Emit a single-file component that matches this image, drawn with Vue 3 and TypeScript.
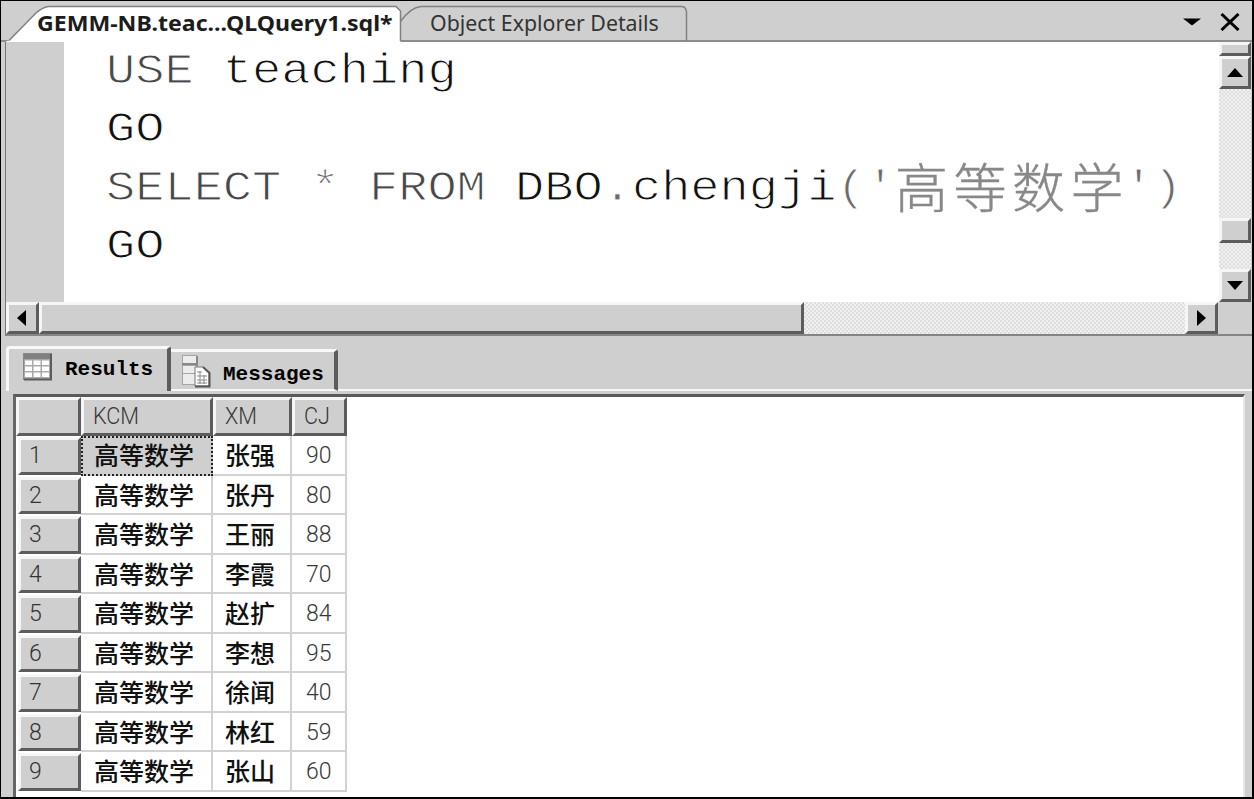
<template>
  <div class="window">
    <header class="tabstrip">
      <svg class="tab-shapes" width="700" height="42" viewBox="0 0 700 42">
        <path class="tab-idle" d="M400 22 Q411 7 421 6.500 H682 Q686 7 686.500 12 V41" />
        <path class="tab-active" d="M5 42 L10 40 L36 13 Q43 7 49 6.500 H396 L400.500 11 V42 Z" />
        <path class="tab-edge" d="M9 40.500 L36 13 Q43 7 49 6.500 H396 L400.500 11 V41" />
      </svg>
      <span class="title active-title"><span>GEMM-NB.teac...QLQuery1.sql*</span></span>
      <span class="title idle-title"><span>Object Explorer Details</span></span>
      <div class="strip-tools">
        <svg width="18" height="8" viewBox="0 0 18 8"><path d="M0 0.500 H18 L9 7.500 Z" /></svg>
        <svg class="close" width="20" height="18" viewBox="0 0 20 18">
          <path d="M1.500 1 L18.500 17 M18.500 1 L1.500 17" />
        </svg>
      </div>
    </header>

    <section class="editor">
      <div class="editor-row">
        <div class="margin"></div>
        <div class="code">
          <div v-for="(line, i) in code" :key="i" class="line">
            <span v-for="(token, j) in line" :key="j" :class="token.kind">{{ token.text }}</span>
          </div>
        </div>
        <div class="vscroll">
          <div class="raised split"></div>
          <div class="raised btn">
            <svg width="16" height="9" viewBox="0 0 16 9"><path d="M8 0 L16 9 H0 Z" /></svg>
          </div>
          <div class="vtrack"></div>
          <div class="raised vthumb"></div>
          <div class="vgap"></div>
          <div class="raised btn">
            <svg width="16" height="9" viewBox="0 0 16 9"><path d="M0 0 H16 L8 9 Z" /></svg>
          </div>
        </div>
      </div>
      <div class="hscroll">
        <div class="raised hbtn">
          <svg width="9" height="16" viewBox="0 0 9 16"><path d="M9 0 V16 L0 8 Z" /></svg>
        </div>
        <div class="raised hthumb"></div>
        <div class="htrack"></div>
        <div class="raised hbtn">
          <svg width="9" height="16" viewBox="0 0 9 16"><path d="M0 0 V16 L9 8 Z" /></svg>
        </div>
        <div class="corner"></div>
      </div>
    </section>

    <nav class="result-tabs">
      <div class="rtab results">
        <svg width="30" height="28" viewBox="0 0 30 28">
          <rect x="0.500" y="0.500" width="28" height="26" fill="#a8a8a8" stroke="#888" />
          <rect x="1" y="1" width="27" height="5" fill="#808080" />
          <path d="M28 1 V26.500 H1" fill="none" stroke="#5c5c5c" stroke-width="2" />
          <g fill="#fff">
            <rect x="2" y="7.500" width="7" height="4.500" /><rect x="10.500" y="7.500" width="7" height="4.500" /><rect x="19" y="7.500" width="7" height="4.500" />
            <rect x="2" y="13.500" width="7" height="4.500" /><rect x="10.500" y="13.500" width="7" height="4.500" /><rect x="19" y="13.500" width="7" height="4.500" />
            <rect x="2" y="19.500" width="7" height="4.500" /><rect x="10.500" y="19.500" width="7" height="4.500" /><rect x="19" y="19.500" width="7" height="4.500" />
          </g>
        </svg>
        <span>Results</span>
      </div>
      <div class="rtab messages">
        <svg width="30" height="34" viewBox="0 0 30 34">
          <g fill="#ececec" stroke="#a4a4a4">
            <rect x="1.500" y="1.500" width="14" height="8" />
            <rect x="1.500" y="11.500" width="14" height="8" />
            <rect x="1.500" y="19.500" width="14" height="11" />
          </g>
          <path d="M1 10 H16 M16 2 V12" stroke="#888" stroke-width="2" />
          <path d="M14 13 H22 L28 19 V32 H14 Z" fill="#fff" stroke="#777" />
          <path d="M22 13 L28.500 19 V32.500 H14" fill="none" stroke="#555" stroke-width="2" />
          <path d="M16 18 H21 M16 22 H26 M16 26 H26 M16 29 H26 M19 17 V30 M23 21 V30" stroke="#888" />
        </svg>
        <span>Messages</span>
      </div>
      <div class="tab-rest"></div>
    </nav>

    <section class="results-pane">
      <div class="grid">
        <div class="row head">
          <div class="raised hcell num"></div>
          <div class="raised hcell kcm"><span>KCM</span></div>
          <div class="raised hcell xm"><span>XM</span></div>
          <div class="raised hcell cj"><span>CJ</span></div>
        </div>
        <div v-for="(row, i) in rows" :key="i" class="row">
          <div class="rownum"><div class="raised"><span>{{ i + 1 }}</span></div></div>
          <div class="cell kcm" :class="{ selected: i === 0 }">{{ row.kcm }}</div>
          <div class="cell xm">{{ row.xm }}</div>
          <div class="cell cj"><span>{{ row.cj }}</span></div>
        </div>
      </div>
    </section>
  </div>
</template>

<script setup lang="ts">
interface Token {
  text: string;
  kind: "keyword" | "plain" | "operator" | "chinese";
}

interface Row {
  kcm: string;
  xm: string;
  cj: number;
}

const code: Token[][] = [
  [
    { text: "USE", kind: "keyword" },
    { text: " teaching", kind: "plain" },
  ],
  [{ text: "GO", kind: "plain" }],
  [
    { text: "SELECT", kind: "keyword" },
    { text: " * ", kind: "operator" },
    { text: "FROM", kind: "keyword" },
    { text: " DBO", kind: "plain" },
    { text: ".", kind: "operator" },
    { text: "chengji", kind: "plain" },
    { text: "('", kind: "operator" },
    { text: "高等数学", kind: "chinese" },
    { text: "')", kind: "operator" },
  ],
  [{ text: "GO", kind: "plain" }],
];

const scores: [string, number][] = [
  ["张强", 90],
  ["张丹", 80],
  ["王丽", 88],
  ["李霞", 70],
  ["赵扩", 84],
  ["李想", 95],
  ["徐闻", 40],
  ["林红", 59],
  ["张山", 60],
];
const rows: Row[] = scores.map(([xm, cj]) => ({ kcm: "高等数学", xm, cj }));
</script>

<style>
body {
  margin: 0;
  background: #cfcfcf;
}
</style>

<style scoped>
.window {
  box-sizing: border-box;
  width: 1254px;
  height: 799px;
  display: flex;
  flex-direction: column;
  overflow: hidden;
  background: #cfcfcf;
  border: 1px solid #000;
  border-right-width: 2px;
  border-bottom-width: 2px;
  font-family: "Noto Sans", "Noto Sans CJK SC", sans-serif;
}

.raised {
  box-sizing: border-box;
  background: #cfcfcf;
  border: 3px solid;
  border-color: #f6f6f6 #5c5c5c #5c5c5c #f6f6f6;
}

/* document tabs */
.tabstrip {
  position: relative;
  display: flex;
  flex: none;
  height: 41px;
  box-sizing: border-box;
  border-bottom: 2px solid #8c8c8c;
}

.tab-shapes {
  position: absolute;
  left: -1px;
  top: -1px;
}

.tab-idle,
.tab-edge {
  fill: none;
  stroke: #808080;
  stroke-width: 1.5;
}

.tab-active {
  fill: #fff;
}

.title {
  position: relative;
  box-sizing: border-box;
  height: 39px;
  line-height: 42px;
  font-size: 22px;
  white-space: nowrap;
}

.title span {
  display: inline-block;
  transform-origin: 0 50%;
}

.active-title {
  width: 400px;
  padding-left: 36px;
  font-weight: bold;
  color: #1c1c1c;
}

.active-title span {
  transform: scaleX(1.05);
}

.idle-title {
  padding-left: 29px;
  color: #333;
}

.idle-title span {
  transform: scaleX(0.97);
}

.strip-tools {
  display: flex;
  align-items: center;
  gap: 19px;
  margin-left: auto;
  padding: 3px 12px 0 0;
}

.close {
  fill: none;
  stroke: #000;
  stroke-width: 3;
}

/* query editor */
.editor {
  flex: none;
  margin-left: 4px;
  border-left: 1px solid #777;
  border-bottom: 2px solid #858585;
}

.editor-row {
  display: flex;
  height: 260px;
}

.margin {
  width: 58px;
}

.code {
  flex: 1;
  box-sizing: border-box;
  padding: 1px 0 0 42px;
  background: #fff;
}

.line {
  display: flex;
  height: 58.400px;
  line-height: 56px;
  font-family: "Liberation Mono", monospace;
  font-size: 48.700px;
  white-space: pre;
}

/* the white stroke trims the glyphs down to thin strokes */
.line span {
  display: block;
  transform: scaleY(0.88);
  -webkit-text-stroke: 1.2px #fff;
}

.keyword {
  color: #484848;
}

.plain {
  color: #111;
}

.operator {
  color: #6c6c6c;
}

.line .chinese {
  margin-right: -5px;
  line-height: 50px;
  font-family: "Noto Sans CJK SC", sans-serif;
  font-weight: 300;
  font-size: 53px;
  letter-spacing: 5.500px;
  color: #888;
  transform: none;
  -webkit-text-stroke: 0.4px #888;
}

.vscroll {
  display: flex;
  flex-direction: column;
  box-sizing: border-box;
  width: 33px;
  padding-right: 1px;
}

.split {
  height: 14px;
}

.btn {
  display: flex;
  align-items: center;
  justify-content: center;
  height: 33px;
}

.vtrack,
.vgap,
.htrack {
  background: repeating-conic-gradient(#dedede 0 25%, #f0f0f0 0 50%) 0 0 / 4px 4px;
}

.vtrack {
  flex: 1;
}

.vthumb {
  height: 25px;
}

.vgap {
  height: 26px;
}

.hscroll {
  display: flex;
  height: 32px;
}

.hbtn {
  display: flex;
  align-items: center;
  justify-content: center;
  width: 33px;
}

.hbtn:first-child {
  padding-right: 3px;
}

.hthumb {
  width: 765px;
}

.htrack {
  flex: 1;
}

.corner {
  width: 34px;
}

/* result tabs */
.result-tabs {
  display: flex;
  flex: none;
  align-items: flex-end;
  height: 55px;
  padding-left: 5px;
}

.rtab {
  display: flex;
  box-sizing: border-box;
  border-top: 3px solid #f8f8f8;
  border-right: 4px solid #5c5c5c;
  border-top-right-radius: 3px;
  font-family: "Liberation Mono", monospace;
  font-weight: bold;
  font-size: 21px;
  line-height: 24px;
  color: #000;
}

.results {
  width: 165px;
  height: 45px;
  padding: 4px 0 0 14px;
  border-left: 3px solid #f8f8f8;
  border-top-left-radius: 4px;
}

.results span {
  margin: 5px 0 0 12px;
}

.messages {
  width: 167px;
  height: 42px;
  padding: 2px 0 0 10px;
  border-bottom: 2px solid #f8f8f8;
}

.messages span {
  margin: 9px 0 0 12px;
}

.tab-rest {
  flex: 1;
  height: 2px;
  background: #f8f8f8;
}

/* results grid */
.results-pane {
  flex: 1;
  min-height: 0;
  margin: 3px 7px 0 12px;
  overflow: hidden;
  background: #fff;
  border-top: 3px solid #5a5a5a;
  border-left: 3px solid #666;
  border-right: 2px solid #e8e8e8;
}

.grid {
  width: 331px;
}

.row {
  display: flex;
  height: 39.550px;
}

.row.head {
  height: 39px;
}

.hcell {
  display: flex;
  align-items: center;
  padding-left: 9px;
  font-family: Roboto, sans-serif;
  font-size: 23px;
  line-height: 28px;
  color: #383838;
}

.hcell span,
.rownum span,
.cj span {
  display: inline-block;
  font-weight: 300;
  transform-origin: 0 50%;
}

.hcell span {
  transform: scaleX(0.94);
}

.num,
.rownum {
  width: 65px;
}

.kcm {
  width: 132px;
}

.xm {
  width: 79px;
}

.cj {
  width: 55px;
}

.rownum {
  box-sizing: border-box;
  padding: 1px 0 1px 2px;
}

.rownum .raised {
  height: 100%;
  padding-left: 8px;
  font-family: Roboto, sans-serif;
  font-size: 23px;
  line-height: 32px;
  color: #333;
}

.cell {
  box-sizing: border-box;
  padding-left: 13px;
  border-right: 2px solid #d2d2d2;
  border-bottom: 2px solid #d2d2d2;
  font-family: "Noto Sans CJK SC", sans-serif;
  font-weight: 500;
  font-size: 25px;
  line-height: 36px;
  white-space: nowrap;
  color: #111;
}

.cell.xm {
  padding-left: 12px;
}

.cell.cj {
  padding-left: 14px;
  font-family: Roboto, sans-serif;
  font-size: 23px;
  line-height: 39px;
  color: #383838;
}

.cell.selected {
  padding-left: 11px;
  line-height: 33px;
  background: #cfcfcf;
  border: 2px dotted #222;
}
</style>
